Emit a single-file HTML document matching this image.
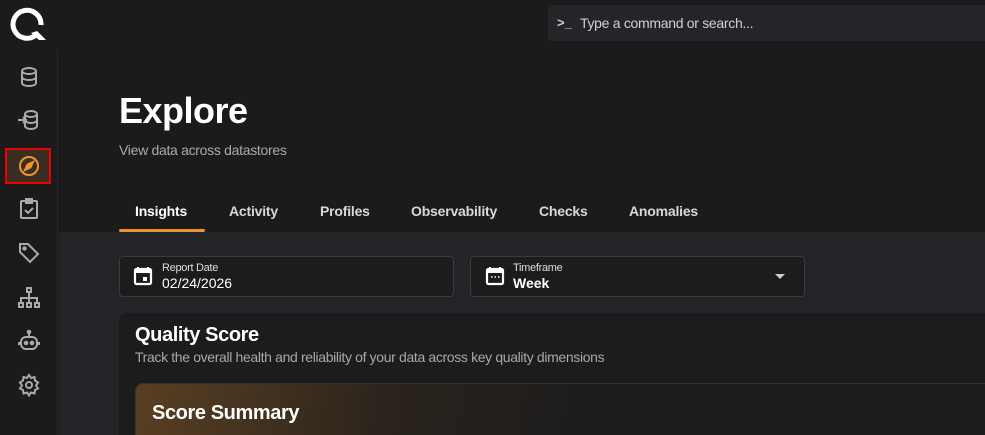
<!DOCTYPE html><html><head><style>
*{margin:0;padding:0;box-sizing:border-box}
html,body{width:985px;height:435px;overflow:hidden}
body{background:#1b1b1b;font-family:"Liberation Sans",sans-serif;position:relative;color:#fff}
.a{position:absolute}
.side{left:0;top:50px;width:58px;height:385px;border-right:1px solid #2a2a2a;background:#1b1b1b}
.ic{position:absolute;left:17px;width:24px;height:24px}
.tab{position:absolute;top:203px;font-size:14px;font-weight:bold;color:#d8d8d8;letter-spacing:-0.2px}
.box{position:absolute;top:256px;height:41px;border:1px solid #3a3a3c;border-radius:4px;background:#1c1c1d}
</style></head><body>
<svg class="a" style="left:9px;top:4px" width="38" height="38" viewBox="0 0 38 38"><path d="M27 31 A14 14 0 1 1 32 21" fill="none" stroke="#fff" stroke-width="5"/><path d="M22 29 L30 36 L37 36 L28 27 Z" fill="#fff"/></svg>
<div class="a" style="left:548px;top:5px;width:445px;height:36px;background:#242528;border-radius:5px"></div>
<div class="a" style="left:557px;top:15px;font-size:13px;font-weight:bold;color:#ccc">&gt;_</div>
<div class="a" style="left:580px;top:15px;font-size:14px;color:#d0d0d0;letter-spacing:-0.3px">Type a command or search...</div>
<div class="a side"></div>
<svg class="ic" style="top:65px" viewBox="0 0 24 24" fill="none" stroke="#aaa" stroke-width="2"><ellipse cx="12" cy="6" rx="7" ry="3"/><path d="M5 6v12c0 1.7 3 3 7 3s7-1.3 7-3V6M5 12c0 1.7 3 3 7 3s7-1.3 7-3"/></svg>
<svg class="ic" style="top:108px" viewBox="0 0 24 24" fill="none" stroke="#aaa" stroke-width="2"><ellipse cx="14" cy="6" rx="6" ry="3"/><path d="M8 6v12c0 1.7 3 3 6 3s6-1.3 6-3V6M8 12c0 1.7 3 3 6 3s6-1.3 6-3M1 12h8M6 9l3 3-3 3"/></svg>
<div class="a" style="left:5px;top:148px;width:46px;height:36px;border:2px solid #e00;background:#3a2e22"></div>
<svg class="ic" style="top:154px" viewBox="0 0 24 24" fill="none" stroke="#f0922e" stroke-width="2"><circle cx="12" cy="12" r="9"/><path d="M16 8l-2.5 5.5L8 16l2.5-5.5z" fill="#f0922e"/></svg>
<svg class="ic" style="top:197px" viewBox="0 0 24 24" fill="none" stroke="#aaa" stroke-width="2"><rect x="4" y="4" width="16" height="17" rx="1"/><rect x="9" y="2" width="6" height="4" fill="#aaa"/><path d="M8 13l3 3 5-5"/></svg>
<svg class="ic" style="top:241px" viewBox="0 0 24 24" fill="none" stroke="#aaa" stroke-width="2"><path d="M3 3h8l10 10-8 8L3 11z"/><circle cx="7.5" cy="7.5" r="1.2" fill="#aaa"/></svg>
<svg class="ic" style="top:286px" viewBox="0 0 24 24" fill="none" stroke="#aaa" stroke-width="2"><rect x="10" y="2" width="4" height="4"/><rect x="2" y="17" width="4" height="4"/><rect x="10" y="17" width="4" height="4"/><rect x="18" y="17" width="4" height="4"/><path d="M12 6v11M4 17v-5h16v5"/></svg>
<svg class="ic" style="top:329px" viewBox="0 0 24 24" fill="none" stroke="#aaa" stroke-width="2"><rect x="4" y="8" width="16" height="12" rx="5"/><path d="M12 8V4"/><circle cx="12" cy="3" r="1.3" fill="#aaa"/><circle cx="9" cy="14" r="1.3" fill="#aaa"/><circle cx="15" cy="14" r="1.3" fill="#aaa"/><path d="M2 13v3M22 13v3"/></svg>
<svg class="ic" style="top:373px" viewBox="0 0 24 24" fill="none" stroke="#aaa" stroke-width="2"><circle cx="12" cy="12" r="3"/><path d="M12 2l2 3 3.5-1 .5 3.5 3 2-2 3 2 3-3 1.5-.5 3.5-3.5-1-2 3-2-3-3.5 1-.5-3.5-3-1.5 2-3-2-3 3-2 .5-3.5 3.5 1z"/></svg>
<div class="a" style="left:119px;top:90px;font-size:36px;font-weight:bold;letter-spacing:-0.5px">Explore</div>
<div class="a" style="left:119px;top:142px;font-size:14px;color:#aaa;letter-spacing:-0.3px">View data across datastores</div>
<div class="tab" style="left:135px;color:#fff">Insights</div>
<div class="tab" style="left:229px">Activity</div>
<div class="tab" style="left:320px">Profiles</div>
<div class="tab" style="left:411px">Observability</div>
<div class="tab" style="left:539px">Checks</div>
<div class="tab" style="left:629px">Anomalies</div>
<div class="a" style="left:119px;top:229px;width:86px;height:3px;background:#f0922e;border-radius:2px"></div>
<div class="a" style="left:59px;top:232px;width:926px;height:203px;background:#232427"></div>
<div class="box" style="left:119px;width:335px"></div>
<svg class="a" style="left:133px;top:266px" width="20" height="20" viewBox="0 0 20 20"><path d="M5 1v3M15 1v3" stroke="#fff" stroke-width="2"/><rect x="2" y="3" width="16" height="15" rx="1.5" fill="none" stroke="#fff" stroke-width="2.2"/><rect x="2" y="3" width="16" height="4" fill="#fff"/><rect x="10" y="11" width="4" height="4" fill="#fff"/></svg>
<div class="a" style="left:162px;top:262px;font-size:11px;color:#ddd;letter-spacing:-0.3px">Report Date</div>
<div class="a" style="left:162px;top:275px;font-size:14px;color:#fff">02/24/2026</div>
<div class="box" style="left:470px;width:335px"></div>
<svg class="a" style="left:485px;top:266px" width="20" height="20" viewBox="0 0 20 20"><path d="M5 1v3M15 1v3" stroke="#fff" stroke-width="2"/><rect x="2" y="3" width="16" height="15" rx="1.5" fill="none" stroke="#fff" stroke-width="2.2"/><rect x="2" y="3" width="16" height="4" fill="#fff"/><path d="M6 11h1.5M9.5 11h1.5M13 11h1.5" stroke="#fff" stroke-width="1.5"/></svg>
<div class="a" style="left:513px;top:262px;font-size:11px;color:#ddd;letter-spacing:-0.3px">Timeframe</div>
<div class="a" style="left:513px;top:275px;font-size:14px;font-weight:bold;color:#fff">Week</div>
<div class="a" style="left:775px;top:274px;width:0;height:0;border-left:5px solid transparent;border-right:5px solid transparent;border-top:5px solid #ccc"></div>
<div class="a" style="left:119px;top:313px;width:866px;height:122px;background:#1c1c1d;border-radius:8px 0 0 0"></div>
<div class="a" style="left:135px;top:324px;font-size:20px;font-weight:bold;letter-spacing:-0.4px">Quality Score</div>
<div class="a" style="left:135px;top:349px;font-size:14px;color:#a8a8a8;letter-spacing:-0.35px">Track the overall health and reliability of your data across key quality dimensions</div>
<div class="a" style="left:135px;top:383px;width:850px;height:52px;border-radius:8px 0 0 0;border:1px solid #333;border-bottom:none;border-right:none;background:linear-gradient(100deg,#5a3f22 0%,#2a231c 30%,#1c1c1d 55%)"></div>
<div class="a" style="left:152px;top:402px;font-size:20px;font-weight:bold;letter-spacing:-0.4px">Score Summary</div>
</body></html>
